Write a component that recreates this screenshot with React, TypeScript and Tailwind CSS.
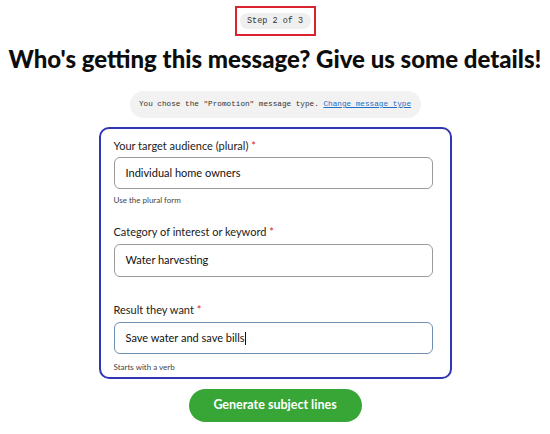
import React from "react";

export default function App() {
  const sans = { fontFamily: "Lato, 'Open Sans', sans-serif" };
  const mono = { fontFamily: "'Liberation Mono', monospace" };
  return (
    <div className="w-[550px] h-[434px] bg-white flex flex-col items-center overflow-hidden" style={sans}>
      <div className="mt-[6px] border-2 border-[#d9232e] px-[3px] py-[5px] flex">
        <div className="h-[16px] w-[71px] rounded-full bg-[#efefef] flex items-center justify-center text-[8.5px] text-[#333] whitespace-nowrap" style={mono}>
          Step 2 of 3
        </div>
      </div>
      <h1 className="mt-[9px] text-[24px] leading-[28px] font-black text-[#0d0d0d] whitespace-nowrap">
        Who's getting this message? Give us some details!
      </h1>
      <div className="mt-[18px] h-[27px] w-[291px] rounded-full bg-[#f2f2f2] flex items-center justify-center text-[7.7px] text-[#333] whitespace-nowrap" style={mono}>
        <span>You chose the "Promotion" message type.&nbsp;</span>
        <span className="text-[#1f6fc4] underline">Change message type</span>
      </div>
      <div className="mt-[9px] w-[353px] h-[252px] border-2 border-[#3136b0] rounded-[10px] pl-[11px] pt-[9px] flex flex-col">
        <div className="pl-[2px] text-[11px] leading-[16px] text-[#222]">
          Your target audience (plural) <span className="text-[#d9232e]">*</span>
        </div>
        <div className="mt-[3px] ml-[2px] w-[319px] h-[32px] border border-[#9a9a9a] rounded-[6px] flex items-center px-[11px] text-[11px] text-[#111]">
          Individual home owners
        </div>
        <div className="mt-[6px] pl-[2px] text-[8px] leading-[10px] text-[#444]">Use the plural form</div>
        <div className="mt-[19px] pl-[2px] text-[11px] leading-[16px] text-[#222]">
          Category of interest or keyword <span className="text-[#d9232e]">*</span>
        </div>
        <div className="mt-[4px] ml-[2px] w-[319px] h-[33px] border border-[#9a9a9a] rounded-[6px] flex items-center px-[11px] text-[11px] text-[#111]">
          Water harvesting
        </div>
        <div className="mt-[25px] pl-[2px] text-[11px] leading-[16px] text-[#222]">
          Result they want <span className="text-[#d9232e]">*</span>
        </div>
        <div className="mt-[4px] ml-[2px] w-[319px] h-[32px] border border-[#6f8fb3] rounded-[6px] flex items-center px-[11px] text-[11px] text-[#111]">
          Save water and save bills<span className="inline-block w-px h-[13px] bg-[#111]" />
        </div>
        <div className="mt-[8px] pl-[2px] text-[8px] leading-[10px] text-[#444]">Starts with a verb</div>
      </div>
      <button className="mt-[10px] w-[173px] h-[33px] rounded-full bg-[#37a637] text-white text-[12.5px] font-bold">
        Generate subject lines
      </button>
    </div>
  );
}
